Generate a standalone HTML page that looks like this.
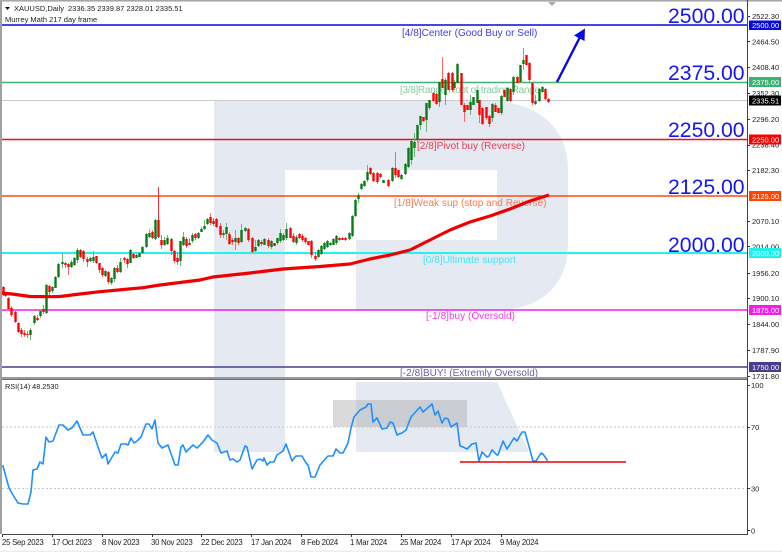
<!DOCTYPE html>
<html><head><meta charset="utf-8"><style>
html,body{margin:0;padding:0;background:#fff;width:782px;height:552px;overflow:hidden}
svg{display:block;filter:blur(.3px)}
text{font-family:"Liberation Sans",sans-serif}
.a{font-size:7.5px;fill:#222}
.d{font-size:7.8px;fill:#222;letter-spacing:-.25px}
.w{font-size:7.5px;fill:#fff}
.b{font-size:21.2px;fill:#1616ee}
.l{font-size:10px;letter-spacing:.03px}
.t{font-size:7.5px;fill:#222}
</style></head><body>
<svg width="782" height="552" viewBox="0 0 782 552" xmlns="http://www.w3.org/2000/svg">
<rect width="782" height="552" fill="#fff"/>
<!-- watermark -->
<path fill="#e4e9f2" d="M214 100H482C535 100 568 125 568 170V245C568 285 540 310 498 310H356V240H497V170H285V377H214Z"/>
<path fill="#e4e9f2" d="M214 380H285V452H214ZM356 382H497L529 452H356Z"/>
<rect x="333" y="400" width="134" height="27" fill="#a8a8a8" opacity=".42"/>
<!-- levels -->
<path fill="none" stroke-width="1.6" d="M2 25H747" stroke="#0808e0"/>
<path fill="none" stroke-width="1.6" d="M2 82.5H747" stroke="#3cb371"/>
<path fill="none" stroke-width="1" d="M2 100.5H747" stroke="#c8c8ce"/>
<path fill="none" stroke-width="1.6" d="M2 139.5H747" stroke="#ee0c20"/>
<path fill="none" stroke-width="1.6" d="M2 196H747" stroke="#ff4a10"/>
<path fill="none" stroke-width="2" d="M2 253H747" stroke="#22f2f2"/>
<path fill="none" stroke-width="1.6" d="M2 310H747" stroke="#f01ee8"/>
<path fill="none" stroke-width="1.4" d="M2 367H747" stroke="#483d8b"/>
<!-- level labels -->
<text class="l" x="402" y="36" fill="#3c3cec">[4/8]Center (Good Buy or Sell)</text>
<text class="l" x="400" y="93" fill="#84cc9c" textLength="140" lengthAdjust="spacing">[3/8]Range Root of trading Range</text>
<text class="l" x="417" y="149" fill="#e63c50">[2/8]Pivot buy (Reverse)</text>
<text class="l" x="394" y="206" fill="#fb7a4c">[1/8]Weak sup (stop and Reverse)</text>
<text class="l" x="423" y="263" fill="#48e6f0">[0/8]Ultimate support</text>
<text class="l" x="426" y="319" fill="#f03ce6">[-1/8]buy (Oversold)</text>
<text class="l" x="400" y="376" fill="#6a62a8">[-2/8]BUY! (Extremly Oversold)</text>
<!-- candle wicks -->
<path fill="none" stroke="#f66" stroke-width="1" d="M3.500 286V296M5.500 292V297M8.500 297V310M11.500 306V317M15.500 310V323M18.500 322V333M21.500 328V337M24.500 330V337M27.500 331V338M37.500 315V321M43.500 305V314M49.500 285V295M65.500 262V268M68.500 263V275M80.500 249V258M83.500 250V262M87.500 257V267M96.500 256V264M99.500 263V273M102.500 267V277M108.500 271V284M117.500 265V273M124.500 257V263M127.500 258V268M133.500 253V259M152.500 230V239M161.500 235V249M171.500 238V255M174.500 250V263M177.500 252V265M186.500 237V248M189.500 238V245M195.500 233V240M210.500 213V225M213.500 218V226M216.500 218V228M220.500 223V238M229.500 232V245M232.500 238V245M238.500 237V245M248.500 228V242M252.500 237V253M261.500 240V246M268.500 238V248M274.500 243V246M290.500 227V238M293.500 233V243M299.500 233V239M302.500 234V242M305.500 237V244M308.500 241V245M311.500 240V258M315.500 252V261M339.500 237V241M342.500 237V240M345.500 237V241M370.500 167V175M373.500 172V182M377.500 172V184M380.500 173V178M388.500 179V187M395.500 152V178M398.500 170V178M423.500 117V122M433.500 92V102M436.500 93V105M442.500 57V87M448.500 72V90M452.500 72V92M461.500 73V105M464.500 103V122M467.500 105V110M479.500 100V123M482.500 107V125M486.500 107V120M489.500 115V127M495.500 103V112M498.500 108V113M504.500 90V97M510.500 88V102M517.500 76V83M526.500 55V65M529.500 62V82M532.500 82V105M545.500 88V100M548.500 98V103"/>
<path fill="none" stroke="#e8303c" stroke-width="1" d="M158.500 187V238"/>
<path fill="none" stroke="#6fb27a" stroke-width="1" d="M30.500 328V340M34.500 315V325M40.500 310V318M46.500 284V314M52.500 286V293M55.500 276V288M58.500 263V278M62.500 253V268M71.500 260V268M74.500 257V266M77.500 248V263M90.500 257V262M93.500 251V263M105.500 270V277M111.500 277V285M114.500 267V282M120.500 258V273M130.500 249V263M136.500 254V258M139.500 252V257M142.500 246V254M146.500 233V248M149.500 229V238M155.500 219V240M164.500 237V246M167.500 235V245M180.500 241V266M183.500 232V246M192.500 233V243M198.500 232V239M201.500 227V232M204.500 220V230M207.500 218V225M223.500 230V238M226.500 223V240M235.500 230V250M241.500 224V243M245.500 227V232M255.500 240V252M258.500 239V247M264.500 238V245M271.500 240V249M277.500 238V245M280.500 229V243M283.500 233V241M286.500 223V240M296.500 235V245M318.500 249V258M321.500 245V255M324.500 242V250M327.500 240V248M330.500 242V246M333.500 238V245M336.500 235V245M349.500 232V240M352.500 215V237M355.500 199V217M358.500 193V203M361.500 183V190M364.500 180V187M367.500 165V182M383.500 180V183M392.500 167V182M401.500 174V180M405.500 163V175M408.500 147V168M411.500 140V165M414.500 133V157M417.500 125V143M420.500 116V130M426.500 103V132M429.500 100V110M439.500 82V107M445.500 78V105M454.500 80V90M457.500 63V83M470.500 95V115M473.500 97V105M477.500 90V103M492.500 103V122M501.500 95V115M507.500 87V102M513.500 76V95M520.500 65V83M523.500 48V70M535.500 95V105M539.500 88V102M542.500 86V93"/>
<!-- candle bodies -->
<path fill="none" stroke="#f00" stroke-width="2.4" d="M3.500 287V295M5.500 293V296M8.500 298V309M11.500 308V315M15.500 312V322M18.500 323V332M21.500 330V334M24.500 333V335M27.500 334V335M37.500 318V320M43.500 309V312M49.500 286V292M65.500 263V265M68.500 264V267M80.500 250V257M83.500 251V259M87.500 259V262M96.500 256V263M99.500 263V270M102.500 268V275M108.500 272V282M117.500 268V272M124.500 258V260M127.500 259V264M133.500 254V258M152.500 232V238M158.500 220V237M161.500 240V245M171.500 239V251M174.500 251V261M177.500 258V262M186.500 239V246M189.500 243V245M195.500 234V238M210.500 217V223M213.500 221V224M216.500 219V227M220.500 226V235M229.500 234V244M232.500 240V242M238.500 238V243M248.500 229V240M252.500 238V252M261.500 242V244M268.500 240V246M274.500 243V246M290.500 228V238M293.500 236V242M299.500 234V238M302.500 236V240M305.500 238V242M308.500 241V245M311.500 241V255M315.500 256V259M339.500 238V240M342.500 238V240M345.500 238V240M370.500 168V174M373.500 173V181M377.500 173V182M380.500 174V177M388.500 180V186M395.500 168V175M398.500 170V177M423.500 117V121M433.500 93V101M436.500 94V104M442.500 79V88M448.500 73V90M452.500 73V90M461.500 73V105M464.500 105V112M467.500 105V110M479.500 100V115M482.500 108V124M486.500 107V118M489.500 116V124M495.500 105V112M498.500 108V113M504.500 90V97M510.500 89V101M517.500 77V83M526.500 55V65M529.500 63V80M532.500 83V103M545.500 89V99M548.500 99V102"/>
<path fill="none" stroke="#087a16" stroke-width="2.4" d="M30.500 330V335M34.500 316V323M40.500 311V316M46.500 285V313M52.500 287V291M55.500 277V288M58.500 264V277M62.500 262V264M71.500 262V267M74.500 258V265M77.500 250V260M90.500 258V261M93.500 257V261M105.500 271V276M111.500 278V283M114.500 268V279M120.500 262V272M130.500 250V263M136.500 255V258M139.500 253V257M142.500 247V253M146.500 234V247M149.500 233V237M155.500 220V239M164.500 240V245M167.500 238V244M180.500 241V261M183.500 237V245M192.500 235V241M198.500 233V238M201.500 229V232M204.500 226V229M207.500 219V224M223.500 233V235M226.500 227V234M235.500 238V242M241.500 230V242M245.500 228V231M255.500 247V251M258.500 240V246M264.500 239V245M271.500 241V247M277.500 238V243M280.500 233V241M283.500 235V240M286.500 229V238M296.500 237V243M318.500 250V257M321.500 246V254M324.500 243V249M327.500 241V247M330.500 243V245M333.500 239V245M336.500 236V243M349.500 233V239M352.500 216V236M355.500 200V216M358.500 195V199M361.500 184V189M364.500 181V186M367.500 172V180M383.500 180V183M392.500 168V181M401.500 175V179M405.500 164V174M408.500 148V167M411.500 141V160M414.500 142V148M417.500 125V140M420.500 116V125M426.500 103V120M429.500 100V108M439.500 82V102M445.500 80V95M454.500 82V88M457.500 64V83M470.500 102V110M473.500 97V105M477.500 90V103M492.500 104V118M501.500 96V113M507.500 88V101M513.500 77V92M520.500 65V82M523.500 60V64M535.500 101V104M539.500 89V101M542.500 87V92"/>
<!-- MA -->
<path fill="none" stroke="#ee0000" stroke-width="3.2" stroke-linejoin="round" d="M2 293L12 294L30 296.500L50 296.700L60 296.500L80 294L100 291.700L143 287.700L160 285L180 282.500L200 280L213 277L250 273L283 269L320 266.500L350 264L370 259L390 255L410 250L430 240L450 230L470 222L490 216L510 209L530 201L549 195"/>
<!-- arrow -->
<path fill="none" stroke="#0808e0" stroke-width="2.400" d="M557 82L580 37"/>
<path fill="#0808e0" d="M585 28.500L584.500 41L574 35.500Z"/>
<!-- big labels -->
<text class="b" x="668" y="23">2500.00</text>
<text class="b" x="668" y="80">2375.00</text>
<text class="b" x="668" y="137">2250.00</text>
<text class="b" x="668" y="194">2125.00</text>
<text class="b" x="668" y="252">2000.00</text>
<!-- top text -->
<path fill="#111" d="M5 7H10L7.500 10Z"/>
<text class="t" x="14" y="11">XAUUSD,Daily</text>
<text class="t" x="68" y="11">2336.35 2339.87 2328.01 2335.51</text>
<text class="t" x="5" y="22">Murrey Math 217 day frame</text>
<path fill="#aaa" d="M548 2H556L552 6Z"/>
<!-- rsi -->
<path fill="none" stroke="#c8c8c8" stroke-width="1" stroke-dasharray="2 2" d="M2 427H747M2 488.500H747"/>
<path fill="none" stroke="#1e90ff" stroke-width="1.600" stroke-linejoin="round" d="M2.700 465L9 488L13 495L18 503L23 504L28 504L31 492L33 470L37 469L40 462L43 464L46 437L49 442L53 441L59 425L63 425L68 430L72 428L77 421L83 435L90 435L93 432L98 447L102 458L106 454L108 464L115 452L118 453L121 444L126 444L128 445L131 438L134 443L137 441L141 437L146 424L149 424L152 429L155 420L158 443L162 448L168 445L175 465L178 465L181 447L183 445L186 452L193 445L197 448L203 442L208 435L212 440L217 443L221 453L227 451L230 460L233 459L237 462L240 460L245 446L247 447L252 469L257 460L260 459L263 461L264 458L267 465L270 462L274 462L277 455L283 451L286 444L292 461L296 456L302 456L306 463L308 465L311 477L315 477L320 465L328 456L333 456L336 449L340 453L343 453L348 443L351 428L354 417L360 410L366 407L368 404L371 404L373 422L377 418L382 429L387 428L390 422L393 423L397 435L402 433L406 430L411 417L420 407L423 412L432 404L435 415L438 411L442 423L445 418L448 419L451 427L457 423L460 446L463 447L467 449L472 444L476 443L479 461L482 452L487 457L489 456L492 450L497 455L498 455L503 441L507 449L514 438L517 441L522 432L525 432L533 461L536 461L541 453L543 454L547 460L548 460"/>
<path fill="none" stroke="#ee0000" stroke-width="1.500" d="M460 462H626"/>
<!-- frame -->
<rect x="0" y="0" width="2" height="534" fill="#a0a0a0"/>
<rect x="0" y="0" width="782" height="1.600" fill="#a8a8a8"/>
<rect x="2" y="377" width="745" height="1" fill="#9a9a9a"/>
<rect x="2" y="378.500" width="745" height="1.200" fill="#333"/>
<rect x="747" y="0" width="1" height="535" fill="#444"/>
<rect x="2" y="534" width="746" height="1" fill="#444"/>
<rect x="0" y="550.500" width="782" height="1.500" fill="#eeeeee"/>
<!-- axis ticks -->
<path fill="none" stroke="#333" stroke-width="1" d="M748 16.500h2M748 41.500h2M748 67.500h2M748 93.500h2M748 119.500h2M748 145.500h2M748 170.500h2M748 221.500h2M748 246.500h2M748 273.500h2M748 298.500h2M748 324.500h2M748 350.500h2M748 376.500h2M748 385.500h2M748 427.500h2M748 488.500h2M748 530.500h2M2.500 535v2M52.500 535v2M102.500 535v2M152.500 535v2M201.500 535v2M251.500 535v2M301.500 535v2M351.500 535v2M401.500 535v2M451.500 535v2M501.500 535v2"/>
<!-- axis labels -->
<text class="a" x="752" y="19">2522.30</text>
<text class="a" x="752" y="44.500">2464.50</text>
<text class="a" x="752" y="70">2408.40</text>
<text class="a" x="752" y="96">2352.30</text>
<text class="a" x="752" y="122">2296.20</text>
<text class="a" x="752" y="147.500">2238.40</text>
<text class="a" x="752" y="173">2182.30</text>
<text class="a" x="752" y="224">2070.10</text>
<text class="a" x="752" y="249.500">2014.00</text>
<text class="a" x="752" y="276">1956.20</text>
<text class="a" x="752" y="301">1900.10</text>
<text class="a" x="752" y="327">1844.00</text>
<text class="a" x="752" y="353">1787.90</text>
<text class="a" x="752" y="379">1731.80</text>
<text class="a" x="751" y="388">100</text>
<text class="a" x="751" y="430">70</text>
<text class="a" x="751" y="491.500">30</text>
<text class="a" x="751" y="533.500">0</text>
<!-- price tags -->
<rect x="749" y="20.500" width="32" height="9.500" fill="#0808e0"/><text class="w" x="752" y="28">2500.00</text>
<rect x="749" y="77" width="32" height="10" fill="#3cb371"/><text class="w" x="752" y="85">2375.00</text>
<rect x="749" y="95.500" width="32" height="10" fill="#000"/><text class="w" x="752" y="103.500">2335.51</text>
<rect x="749" y="134.500" width="32" height="10" fill="#f00"/><text class="w" x="752" y="142.500">2250.00</text>
<rect x="749" y="191" width="32" height="10" fill="#ff4500"/><text class="w" x="752" y="199">2125.00</text>
<rect x="749" y="248" width="32" height="10" fill="#1ef0f0"/><text class="w" x="752" y="256">2000.00</text>
<rect x="749" y="305" width="32" height="10" fill="#f01ee8"/><text class="w" x="752" y="313">1875.00</text>
<rect x="749" y="362" width="32" height="10" fill="#483d8b"/><text class="w" x="752" y="370">1750.00</text>
<!-- rsi label -->
<text x="5" y="389" font-size="7.300" fill="#222">RSI(14) 48.2530</text>
<!-- dates -->
<text class="d" x="2" y="545">25 Sep 2023</text>
<text class="d" x="52" y="545">17 Oct 2023</text>
<text class="d" x="102" y="545">8 Nov 2023</text>
<text class="d" x="151" y="545">30 Nov 2023</text>
<text class="d" x="201" y="545">22 Dec 2023</text>
<text class="d" x="251" y="545">17 Jan 2024</text>
<text class="d" x="301" y="545">8 Feb 2024</text>
<text class="d" x="350" y="545">1 Mar 2024</text>
<text class="d" x="400" y="545">25 Mar 2024</text>
<text class="d" x="451" y="545">17 Apr 2024</text>
<text class="d" x="500" y="545">9 May 2024</text>
</svg>
</body></html>
